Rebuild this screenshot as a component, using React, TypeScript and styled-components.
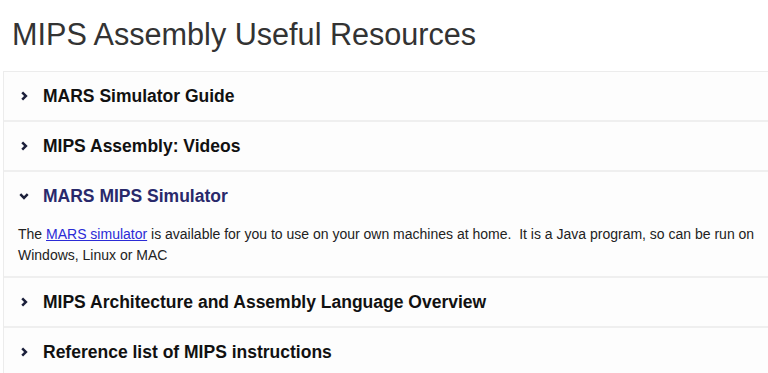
import React from "react";
import styled, { createGlobalStyle } from "styled-components";

const GlobalStyle = createGlobalStyle`
  body {
    margin: 0;
    background: #fff;
    font-family: "Liberation Sans", Arial, sans-serif;
    overflow: hidden;
  }
`;

const SPage = styled.div`
  padding: 0 0 0 3px;
  overflow: hidden;
`;

const STitle = styled.h1`
  margin: 0;
  padding: 16px 0 0 9px;
  height: 71px;
  box-sizing: border-box;
  font-size: 30.6px;
  font-weight: 400;
  line-height: 36px;
  color: #333;
`;

const SPanel = styled.div`
  border-top: 1px solid #ececec;
  border-left: 1px solid #ececec;
  margin-right: -40px;
`;

const SItem = styled.div`
  background: #fdfdfd;
  border-bottom: 2px solid #efefef;
`;

const SHeader = styled.div<{ open?: boolean }>`
  height: 48px;
  display: flex;
  align-items: center;
  padding-left: 14px;
  font-size: 17.5px;
  font-weight: 700;
  color: ${(p) => (p.open ? "#29296b" : "#111")};
  cursor: pointer;
`;

const SIcon = styled.span`
  width: 12px;
  height: 12px;
  margin-right: 13px;
  display: flex;
  align-items: center;
  justify-content: center;
  color: #1b1f3a;
`;

const SBody = styled.div`
  padding: 4px 16px 10px 14px;
  font-size: 14px;
  line-height: 21px;
  color: #222;
  white-space: pre-wrap;
`;

const SLink = styled.a`
  color: #2b2bd6;
  text-decoration: underline;
`;

const Chevron = ({ open }: { open?: boolean }) => (
  <svg width="12" height="12" viewBox="0 0 12 12" fill="none">
    <path
      d={open ? "M2.3 4.2 L6 7.9 L9.7 4.2" : "M4.2 2.3 L7.9 6 L4.2 9.7"}
      stroke="currentColor"
      strokeWidth="2.5"
    />
  </svg>
);

const items = [
  { title: "MARS Simulator Guide" },
  { title: "MIPS Assembly: Videos" },
  { title: "MARS MIPS Simulator", open: true },
  { title: "MIPS Architecture and Assembly Language Overview" },
  { title: "Reference list of MIPS instructions" },
];

export default function App() {
  return (
    <SPage>
      <GlobalStyle />
      <STitle>MIPS Assembly Useful Resources</STitle>
      <SPanel>
        {items.map((item) => (
          <SItem key={item.title}>
            <SHeader open={item.open}>
              <SIcon>
                <Chevron open={item.open} />
              </SIcon>
              {item.title}
            </SHeader>
            {item.open && (
              <SBody>
                The <SLink href="#">MARS simulator</SLink> is available for you
                to use on your own machines at home.{"  "}It is a Java program,
                so can be run on{"\n"}Windows, Linux or MAC
              </SBody>
            )}
          </SItem>
        ))}
      </SPanel>
    </SPage>
  );
}
